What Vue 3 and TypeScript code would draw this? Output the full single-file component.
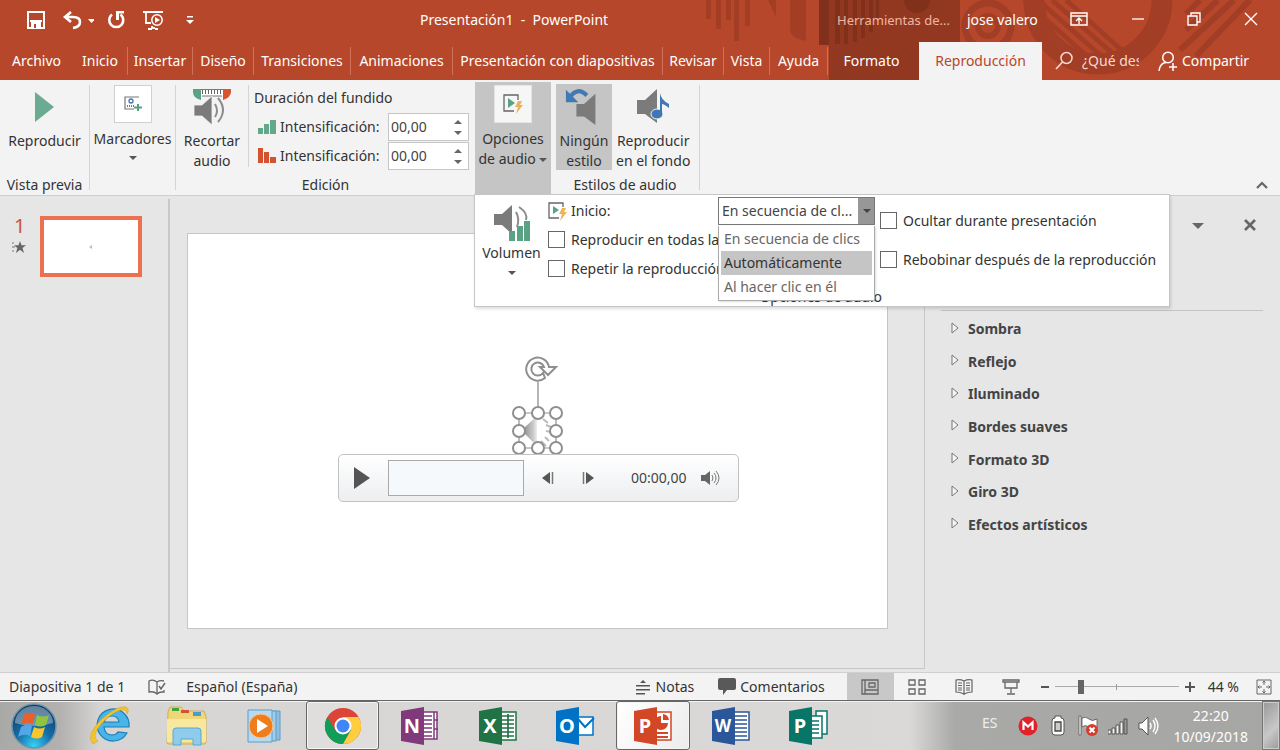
<script setup lang="ts">
import { ref } from 'vue'

interface Tab { label: string; kind?: 'context' | 'active' }
const tabs: Tab[] = [
  { label: 'Archivo' }, { label: 'Inicio' }, { label: 'Insertar' }, { label: 'Diseño' },
  { label: 'Transiciones' }, { label: 'Animaciones' }, { label: 'Presentación con diapositivas' },
  { label: 'Revisar' }, { label: 'Vista' }, { label: 'Ayuda' },
  { label: 'Formato', kind: 'context' }, { label: 'Reproducción', kind: 'active' },
]
const startOptions = ['En secuencia de clics', 'Automáticamente', 'Al hacer clic en él']
const highlighted = ref('Automáticamente')
const effects = ['Sombra', 'Reflejo', 'Iluminado', 'Bordes suaves', 'Formato 3D', 'Giro 3D', 'Efectos artísticos']
const fadeIn = ref('00,00')
const fadeOut = ref('00,00')
const zoom = ref(26)
const handles = [[7, 7], [26, 7], [44, 7], [7, 25], [44, 25], [7, 42], [26, 42], [44, 42]]
</script>

<template>
  <div class="app">
    <header class="head">
      <svg class="decor" viewBox="0 0 600 80" width="600" height="80" aria-hidden="true">
        <path d="M26 0h5v19h-5zM36 0h5v29h-5zM46 0h5v20h-5zM54 0h5v41h-5zM65 0h5v26h-5zM88 0h8v17zM110 0h16v41l-10-3q-6-3-6-9z" fill="#a33e24" />
        <path d="M139 0h10v45h-10z" fill="#80301b" />
        <path d="M149 0h131v42h-41v38h-90z" fill="#933820" />
        <path d="M155 0h5v44h-5zM164 0h4v44h-4zM173 0h4v42h-4zM181 0h4v38h-4zM189 0h4v32h-4zM196 0h3v20h-3z" fill="#813019" />
        <circle cx="237" cy="0" r="13" fill="#813019" />
        <g fill="none" stroke="#a33e26">
          <circle cx="308" cy="26" r="23" stroke-width="7" /><circle cx="308" cy="26" r="10" stroke-width="6" />
          <path d="M354 0a64 64 0 0 0 128 0" stroke-width="21" />
          <path d="M344 0l74 66M358 0l72 64M372 0l68 60M386 0l62 56" stroke-width="5" />
          <path d="M506 14l14-14M506 30l32-30M500 50l54-50M516 56l54-56" stroke-width="6" />
        </g>
      </svg>
      <div class="title-row">
        <div class="quick">
          <button aria-label="Guardar"><svg width="20" height="20" viewBox="0 0 20 20"><path d="M2 2h16v16H2zM4 11h12" fill="none" stroke="#fff" stroke-width="2" /><path d="M5 12h10v6H5z" fill="#fff" /><path d="M8 14h2v4H8z" fill="#b7472a" /></svg></button>
          <button class="undo" aria-label="Deshacer"><svg width="32" height="20" viewBox="0 0 32 20"><path d="M3 7h8q7 0 7 5t-7 6M9 2L3 7l6 5" fill="none" stroke="#fff" stroke-width="2.6" /><path d="M26 9h7l-3.500 4z" fill="#fff" /></svg></button>
          <button class="redo" aria-label="Repetir"><svg width="20" height="20" viewBox="0 0 20 20"><path d="M6 4.500a7 7 0 1 0 8.500 0" fill="none" stroke="#fff" stroke-width="2.6" /><path d="M10 1h8v2.500h-5V10h-3z" fill="#fff" /></svg></button>
          <button aria-label="Presentar"><svg width="22" height="20" viewBox="0 0 22 20"><path d="M1 2h20M4 2v11h5M10 16v3M6 19h4M13 19h3M12 17v2" fill="none" stroke="#fff" stroke-width="1.8" /><circle cx="15" cy="10" r="5.2" fill="none" stroke="#fff" stroke-width="1.5" /><path d="M13 7l5 3-5 3z" fill="#fff" /></svg></button>
          <button class="more" aria-label="Personalizar"><svg width="8" height="10" viewBox="0 0 8 10"><path d="M1 1h6v1.500H1zM0 5h8L4 9z" fill="#fff" /></svg></button>
        </div>
        <h1>Presentación1 &nbsp;- &nbsp;PowerPoint</h1>
        <span class="tools">Herramientas de...</span>
        <span class="user">jose valero</span>
        <div class="win">
          <button aria-label="Opciones de la cinta"><svg width="18" height="14" viewBox="0 0 18 14"><path d="M1 1h16v12H1zM1 4h16M9 12V6M6 9l3-3 3 3" fill="none" stroke="#fff" stroke-width="1.4" /></svg></button>
          <button aria-label="Minimizar"><svg width="14" height="14" viewBox="0 0 14 14"><path d="M1 7h12" stroke="#fff" stroke-width="1.3" /></svg></button>
          <button aria-label="Restaurar"><svg width="14" height="14" viewBox="0 0 14 14"><path d="M1 4h9v9H1zM4 4V1h9v9h-3" fill="none" stroke="#fff" stroke-width="1.4" /></svg></button>
          <button aria-label="Cerrar"><svg width="14" height="14" viewBox="0 0 14 14"><path d="M1 1l12 12M13 1L1 13" stroke="#fff" stroke-width="1.4" /></svg></button>
        </div>
      </div>
      <nav class="tabs">
        <button v-for="t in tabs" :key="t.label" :class="['tab', t.kind]">{{ t.label }}</button>
        <div class="tell">
          <svg width="20" height="20" viewBox="0 0 20 20"><circle cx="12.500" cy="7" r="5.500" fill="none" stroke="#f6d8cf" stroke-width="1.500" /><path d="M8.500 11L2 18" stroke="#f6d8cf" stroke-width="1.700" /></svg>
          <span>¿Qué desea</span>
        </div>
        <button class="share">
          <svg width="20" height="21" viewBox="0 0 20 21"><circle cx="10" cy="6.500" r="5.300" fill="none" stroke="#fff" stroke-width="1.500" /><path d="M1 20q1-8 7-8.500M15 12v8M11 16h8" fill="none" stroke="#fff" stroke-width="1.500" /></svg>
          <span>Compartir</span>
        </button>
      </nav>
    </header>

    <section class="ribbon" aria-label="Reproducción">
      <div class="group g-preview">
        <button class="big"><svg width="22" height="32" viewBox="0 0 22 32"><path d="M1 1l19 15L1 31z" fill="#6bab91" /></svg><span>Reproducir</span></button>
        <footer>Vista previa</footer>
      </div>
      <div class="group g-marks">
        <button class="big boxed"><span class="box"><svg width="20" height="18" viewBox="0 0 20 18"><path d="M16 2H2v12h9" fill="none" stroke="#777" stroke-width="1.200" /><circle cx="8" cy="6" r="2" fill="none" stroke="#3f78b4" stroke-width="1.300" /><path d="M4 11h7" stroke="#777" stroke-width="2" stroke-dasharray="1 1" /><path d="M15 9v7M11 12.500h8" stroke="#55a083" stroke-width="2" /></svg></span><span>Marcadores</span><i class="arrow"></i></button>
      </div>
      <div class="group g-edit">
        <div class="edit-row">
          <button class="big trim"><svg width="40" height="38" viewBox="0 0 40 38"><path d="M3 2h34v6H3z" fill="#fff" /><path d="M8 1.500h24M10 8h20" stroke="#777" /><path d="M10 4h20" stroke="#666" stroke-width="4" stroke-dasharray="1 2" /><path d="M1 1h8v11Q1 10 1 4z" fill="#5ba183" /><path d="M31 1h8v3q0 5-8 8z" fill="#d9532f" /><path d="M2 17h8L20 8v29L10 28H2z" fill="#7b7b7b" stroke="#f3f3f3" stroke-width=".800" /><path d="M23 16q4 7 0 13M26 10q10 12 0 24" fill="none" stroke="#8c8c8c" stroke-width="2" /></svg><span>Recortar<br>audio</span></button>
          <div class="fade">
            <strong>Duración del fundido</strong>
            <div class="fade-line">
              <svg width="18" height="16" viewBox="0 0 18 16"><path d="M0 9h5v6H0zM6 5h5v10H6zM12 1h6v14h-6z" fill="#63a88b" /></svg>
              <label for="fade-in">Intensificación:</label>
              <span class="spin"><input id="fade-in" v-model="fadeIn" type="text"><i class="up"></i><i class="down"></i></span>
            </div>
            <div class="fade-line">
              <svg width="18" height="16" viewBox="0 0 18 16"><path d="M0 0h5v15H0zM6 4h5v11H6zM12 9h6v6h-6z" fill="#d35230" /></svg>
              <label for="fade-out">Intensificación:</label>
              <span class="spin"><input id="fade-out" v-model="fadeOut" type="text"><i class="up"></i><i class="down"></i></span>
            </div>
          </div>
        </div>
        <footer>Edición</footer>
      </div>
      <div class="options">
        <button class="big boxed"><span class="box"><svg width="22" height="22" viewBox="0 0 22 22"><path d="M16 7V2H2v16h10" fill="none" stroke="#666" stroke-width="1.300" /><path d="M6 5l7 5-7 5z" fill="#5ba183" /><path d="M16 8h4l-2 4h3l-7 9 2-7h-3z" fill="#eab35c" /></svg></span><span>Opciones<br>de audio <i class="arrow"></i></span></button>

        <div class="popup">
          <button class="volume"><svg width="40" height="40" viewBox="0 0 40 40"><path d="M2 11h8L20 2v29L10 22H2z" fill="#7b7b7b" /><path d="M24 9q4 7 1 15M27 4q9 6 7 13" fill="none" stroke="#8c8c8c" stroke-width="2" /><path d="M17 28h6v10h-6zM25 23h6v15h-6zM32 18h6v20h-6z" fill="#5ba183" /></svg><span>Volumen</span><i class="arrow"></i></button>
          <div class="pop-left">
            <div class="start">
              <svg width="20" height="20" viewBox="0 0 20 20"><path d="M15 6V2H1v15h10" fill="none" stroke="#666" stroke-width="1.300" /><path d="M5 5l6 4-6 4z" fill="#5ba183" /><path d="M14 7h4l-2 4h3l-7 9 2-7h-3z" fill="#eab35c" /></svg>
              <label for="start">Inicio:</label>
              <select id="start"><option>En secuencia de cl...</option></select>
            </div>
            <label class="check"><input type="checkbox">Reproducir en todas las</label>
            <label class="check"><input type="checkbox">Repetir la reproducción</label>
            <ul class="menu" role="listbox" aria-label="Inicio">
              <li v-for="o in startOptions" :key="o" role="option" :aria-selected="o === highlighted" :class="{ hot: o === highlighted }">{{ o }}</li>
            </ul>
            <p class="caption">Opciones de audio</p>
          </div>
          <div class="pop-right">
            <label class="check"><input type="checkbox">Ocultar durante presentación</label>
            <label class="check"><input type="checkbox">Rebobinar después de la reproducción</label>
          </div>
        </div>
      </div>
      <div class="group g-style">
        <div class="style-row">
          <button class="big on"><svg width="40" height="40" viewBox="0 0 40 40"><path d="M12 18h8L32 7v33L20 31h-8z" fill="#7b7b7b" /><path d="M5 11Q13-1 23 9" fill="none" stroke="#4179b5" stroke-width="4.500" /><path d="M1 3v13h13z" fill="#4179b5" /></svg><span>Ningún<br>estilo</span></button>
          <button class="big"><svg width="36" height="38" viewBox="0 0 36 38"><path d="M2 13h8L22 2v34L10 27H2z" fill="#7b7b7b" /><ellipse cx="22" cy="27" rx="6" ry="5" fill="#3f78b4" stroke="#f3f3f3" /><path d="M25 27V6q1 7 9 11v4q-5-4-7-4v10z" fill="#3f78b4" /></svg><span>Reproducir<br>en el fondo</span></button>
        </div>
        <footer>Estilos de audio</footer>
      </div>
      <button class="collapse" aria-label="Contraer la cinta"><svg width="12" height="8" viewBox="0 0 12 8"><path d="M1 7l5-5 5 5" fill="none" stroke="#666" stroke-width="2.200" /></svg></button>
    </section>

    <main class="work">
      <aside class="thumbs">
        <div class="num"><span>1</span><svg width="14" height="14" viewBox="0 0 14 14"><path d="M8 1l1.500 4.200H14l-3.500 2.700L12 13 8 9.800 4 13l1.300-5.100L2 5.200h4.500z" fill="#666" /><path d="M0 3h2M0 7h3M0 11h2" stroke="#777" /></svg></div>
        <button class="thumb" aria-label="Diapositiva 1"><svg width="6" height="6" viewBox="0 0 6 6"><path d="M1 3l3-2v4z" fill="#bbb" /></svg></button>
      </aside>
      <div class="stage">
        <div class="slide">
          <svg class="picture" width="52" height="100" viewBox="0 0 52 100" aria-hidden="true">
            <defs><linearGradient id="spk"><stop offset="0" stop-color="#999" /><stop offset=".7" stop-color="#ccc" /><stop offset="1" stop-color="#eee" /></linearGradient></defs>
            <g fill="none" stroke="#8f8f8f">
              <path d="M26 27v24" stroke-width="1.300" />
              <path d="M33 23a11.500 11.500 0 1 1 4-11h7l-8 8-8-8h4a6.500 6.500 0 1 0-1 6z" stroke-width="2" />
              <path d="M7 58h37v35H7z" stroke-width="1.200" />
            </g>
            <path d="M13 72l12-11v30L13 79z" fill="url(#spk)" />
            <path d="M31 64l5 4M34 70l5 2M34 76l5 1M33 82l4 4M29 86l5 5" stroke="#bbb" stroke-width="2" />
            <circle v-for="(h, i) in handles" :key="i" :cx="h[0]" :cy="h[1] + 51" r="6" fill="#fff" stroke="#8f8f8f" stroke-width="2" />
          </svg>
          <div class="player">
            <button aria-label="Reproducir"><svg width="18" height="24" viewBox="0 0 18 24"><path d="M1 1l16 11L1 23z" fill="#555" /></svg></button>
            <div class="track"></div>
            <button aria-label="Retroceder"><svg width="12" height="14" viewBox="0 0 12 14"><path d="M8 1v12L0 7z" fill="#555" /><path d="M10.500 1v12" stroke="#777" stroke-width="1.500" /></svg></button>
            <button class="fwd" aria-label="Avanzar"><svg width="12" height="14" viewBox="0 0 12 14"><path d="M4 1v12l8-6z" fill="#555" /><path d="M1.500 1v12" stroke="#777" stroke-width="1.500" /></svg></button>
            <time>00:00,00</time>
            <button aria-label="Silenciar"><svg width="20" height="16" viewBox="0 0 20 16"><path d="M0 5h4l5-4v14l-5-4H0z" fill="#666" /><path d="M11 5q2 3 0 6M13 3q4 5 0 10M15 1q6 7 0 14" fill="none" stroke="#777" /></svg></button>
          </div>
        </div>
      </div>
      <aside class="pane">
        <div class="pane-head">
          <button aria-label="Opciones del panel"><svg width="12" height="6" viewBox="0 0 12 6"><path d="M0 0h12L6 6z" fill="#666" /></svg></button>
          <button aria-label="Cerrar el panel"><svg width="14" height="14" viewBox="0 0 14 14"><path d="M2 2l10 10M12 2L2 12" stroke="#666" stroke-width="2.600" /></svg></button>
        </div>
        <div class="effects">
          <button v-for="e in effects" :key="e"><svg width="8" height="12" viewBox="0 0 8 12"><path d="M1 1l6 5-6 5z" fill="#f5f5f5" stroke="#777" /></svg><span>{{ e }}</span></button>
        </div>
      </aside>
    </main>

    <div class="status">
      <span>Diapositiva 1 de 1</span>
      <svg class="book" width="18" height="16" viewBox="0 0 18 16"><path d="M9 3v12M9 3Q5 0 1 2v11q5-1 8 2 2-2 5-2h2v-2M9 3q3-2 7-1" fill="none" stroke="#666" stroke-width="1.300" /><path d="M11 7l2 3 4-6" fill="none" stroke="#666" stroke-width="1.500" /></svg>
      <span>Español (España)</span>
      <div class="status-right">
        <button class="notes"><svg width="14" height="16" viewBox="0 0 14 16"><path d="M4 4l3-3 3 3zM0 6h14v1.500H0zM0 10h14v1.500H0zM0 14h9v1.500H0z" fill="#555" /></svg>Notas</button>
        <button class="comments"><svg width="18" height="17" viewBox="0 0 18 17"><path d="M2 0h14q2 0 2 2v8q0 2-2 2H9l-4 5v-5H2q-2 0-2-2V2q0-2 2-2z" fill="#595959" /></svg>Comentarios</button>
        <button class="view sel" aria-label="Normal"><svg width="18" height="16" viewBox="0 0 18 16"><path d="M1 1h16v14H1zM4 1v14M4 11h13M8 4h6v4H8z" fill="none" stroke="#666" stroke-width="1.300" /></svg></button>
        <button class="view" aria-label="Clasificador"><svg width="18" height="16" viewBox="0 0 18 16"><path d="M1 1h6v5H1zM11 1h6v5h-6zM1 10h6v5H1zM11 10h6v5h-6z" fill="none" stroke="#666" stroke-width="1.300" /></svg></button>
        <button class="view" aria-label="Lectura"><svg width="18" height="16" viewBox="0 0 18 16"><path d="M9 2v14M9 2Q5 0 1 1v12q4 0 8 2 4-2 8-2V1q-4-1-8 1M3 4h4M3 6.500h4M3 9h4M3 11h4M11 4h4M11 6.500h4M11 9h4M11 11h4" fill="none" stroke="#666" stroke-width="1.200" /></svg></button>
        <button class="view" aria-label="Presentación"><svg width="18" height="16" viewBox="0 0 18 16"><path d="M1 1h16v2H1zM3 3v6h12V3M9 9v5M5 15h8" fill="none" stroke="#666" stroke-width="1.300" /></svg></button>
        <button class="zoom-btn" aria-label="Alejar"><svg width="8" height="8" viewBox="0 0 8 8"><path d="M0 4h8" stroke="#555" stroke-width="2" /></svg></button>
        <input v-model="zoom" class="zoom" type="range" min="0" max="130" aria-label="Zoom">
        <button class="zoom-btn" aria-label="Acercar"><svg width="10" height="10" viewBox="0 0 10 10"><path d="M0 5h10M5 0v10" stroke="#555" stroke-width="2" /></svg></button>
        <span class="percent">44 %</span>
        <button class="fit" aria-label="Ajustar a la ventana"><svg width="16" height="16" viewBox="0 0 16 16"><path d="M1 1h14v14H1z" fill="none" stroke="#666" /><path d="M8 2v4M6.500 3.500L8 2l1.500 1.500M8 14v-4M6.500 12.500L8 14l1.500-1.500M2 8h4M3.500 6.500L2 8l1.500 1.500M14 8h-4M12.500 6.500L14 8l-1.500 1.500" fill="none" stroke="#666" /></svg></button>
      </div>
    </div>

    <div class="taskbar">
      <button class="orb" aria-label="Inicio de Windows">
        <svg width="46" height="46" viewBox="0 0 46 46">
          <defs><radialGradient id="orb" cx=".5" cy=".95" r=".9"><stop offset="0" stop-color="#35d2f6" /><stop offset=".45" stop-color="#176fa8" /><stop offset="1" stop-color="#103c63" /></radialGradient></defs>
          <circle cx="23" cy="23" r="22" fill="url(#orb)" stroke="#6f93ab" stroke-width="1.500" />
          <path d="M4 20a19 17 0 0 1 38 0Q23 26 4 20z" fill="#fff" opacity=".35" />
          <path d="M13 12q5-4 11-1l-2 10q-6-3-12 1z" fill="#ec5f2a" /><path d="M26 12q6 3 12 0l-3 10q-6 3-11 0z" fill="#8fc63d" />
          <path d="M10 24q6-4 11-1l-2 10q-6-3-12 1z" fill="#53a7e8" /><path d="M23 24q6 3 11 0l-3 10q-5 3-11 0z" fill="#fbc62c" />
        </svg>
      </button>
      <div class="apps">
        <button aria-label="Internet Explorer"><svg width="42" height="42" viewBox="0 0 42 42"><path d="M38 28a16 16 0 1 1 2-6H15q1 8 8 8 4 0 6-3zM15 17h15q-1-6-7-6t-8 6z" fill="#48b4e8" stroke="#1d7fb8" stroke-width="1.200" /><path d="M4 39Q-4 30 13 14 29 0 37 2q4 2 1 7 0-5-6-4-9 2-19 13Q1 32 9 36z" fill="#f3c52b" stroke="#dba51c" stroke-width=".600" /></svg></button>
        <button aria-label="Explorador"><svg width="42" height="40" viewBox="0 0 42 40"><path d="M2 6l2-5h11l3 4h20l2 5v26q0 2-2 2H3q-2 0-2-2z" fill="#efd676" stroke="#cfae4c" /><path d="M1 13h39v23H1z" fill="#f7e79f" /><path d="M6 2h7v3H6z" fill="#41a340" /><path d="M15 4h8v3h-8z" fill="#d94f36" /><path d="M27 6h8v4h-8z" fill="#4a9bd4" /><path d="M7 39V25q0-3 3-3h22q3 0 3 3v14h-8v-6H15v6z" fill="#8fcbea" stroke="#5ba8d2" /></svg></button>
        <button aria-label="Reproductor"><svg width="38" height="36" viewBox="0 0 38 36"><path d="M12 3h22v29H12z" fill="#8cbfe0" stroke="#5b9cc8" /><path d="M9 3h21v30H9z" fill="#a2cee8" stroke="#5b9cc8" /><path d="M2 2h24v32H2z" fill="#b6daef" stroke="#5b9cc8" /><circle cx="15" cy="18" r="12" fill="#f07d1c" stroke="#fac891" /><path d="M11 11l11 7-11 7z" fill="#fff" /></svg></button>
        <button class="run" aria-label="Chrome"><svg width="38" height="38" viewBox="0 0 38 38"><circle cx="19" cy="19" r="18" fill="#dc4437" /><path d="M3.400 10A18 18 0 0 0 19 37l8-14-8-4-8 4z" fill="#109d58" /><path d="M19 10h15.600A18 18 0 0 1 19 37l8-14z" fill="#ffcd40" /><circle cx="19" cy="19" r="8.500" fill="#fff" /><circle cx="19" cy="19" r="6.500" fill="#4285f4" /></svg></button>
        <button aria-label="OneNote"><svg width="40" height="40" viewBox="0 0 40 40"><path d="M20 6h17v27H20z" fill="#fff" stroke="#80397b" stroke-width="1.500" /><path d="M22 10h10M22 14h10M22 18h10M22 22h10M22 26h10M22 30h10M34 6v27M34 14h4M34 23h4" stroke="#80397b" stroke-width="1.500" /><path d="M1 5l23-4v38L1 35z" fill="#80397b" /><text x="12" y="27" class="glyph">N</text></svg></button>
        <button aria-label="Excel"><svg width="40" height="40" viewBox="0 0 40 40"><path d="M20 6h18v28H20z" fill="#fff" stroke="#217346" stroke-width="1.500" /><path d="M24 10h12M24 14h12M24 18h12M24 22h12M24 26h12M24 30h12M30 8v24" stroke="#217346" stroke-width="1.700" /><path d="M1 5l23-4v38L1 35z" fill="#217346" /><text x="12" y="27" class="glyph">X</text></svg></button>
        <button aria-label="Outlook"><svg width="40" height="40" viewBox="0 0 40 40"><path d="M20 11h18v18H20z" fill="#fff" stroke="#0072c6" stroke-width="1.500" /><path d="M23 13l7 8 9-9" fill="none" stroke="#0072c6" stroke-width="2" /><path d="M1 5l23-4v38L1 35z" fill="#0072c6" /><text x="12" y="27" class="glyph">O</text></svg></button>
        <button class="run front" aria-label="PowerPoint"><svg width="40" height="40" viewBox="0 0 40 40"><path d="M20 6h18v28H20z" fill="#fff" stroke="#d24726" stroke-width="1.500" /><path d="M28 10v7h7a7 7 0 1 1-7-7zM30 8a7 7 0 0 1 6 6h-6z" fill="#d24726" /><path d="M24 27h11M24 31h11" stroke="#d24726" stroke-width="2" /><path d="M1 5l23-4v38L1 35z" fill="#d24726" /><text x="12" y="27" class="glyph">P</text></svg></button>
        <button aria-label="Word"><svg width="40" height="40" viewBox="0 0 40 40"><path d="M20 6h18v28H20z" fill="#fff" stroke="#2b579a" stroke-width="1.500" /><path d="M24 10h12M24 14h12M24 18h12M24 22h12M24 26h12M24 30h12" stroke="#2b579a" stroke-width="1.700" /><path d="M1 5l23-4v38L1 35z" fill="#2b579a" /><text x="12" y="26" class="glyph w">W</text></svg></button>
        <button aria-label="Publisher"><svg width="40" height="40" viewBox="0 0 40 40"><path d="M28 5h11v23H28z" fill="#fff" stroke="#077568" stroke-width="1.500" /><path d="M20 10h14v22H20z" fill="#fff" stroke="#077568" stroke-width="1.500" /><path d="M24 15h7M24 19h7M24 23h7M24 27h7" stroke="#077568" stroke-width="1.700" /><path d="M1 5l23-4v38L1 35z" fill="#077568" /><text x="12" y="27" class="glyph">P</text></svg></button>
      </div>
      <div class="tray">
        <span class="lang">ES</span>
        <svg width="20" height="20" viewBox="0 0 20 20"><circle cx="10" cy="10" r="9.500" fill="#e1222a" /><path d="M5.500 14V6.500l4.500 4 4.500-4V14" fill="none" stroke="#fff" stroke-width="2.200" /></svg>
        <svg width="20" height="22" viewBox="0 0 20 22"><path d="M7 3V1h6v2q3 0 3 3v11q0 3-3 3H7q-3 0-3-3V6q0-3 3-3z" fill="#fff" stroke="#555" /><path d="M7 7h6v9H7z" fill="#ccc" stroke="#444" stroke-width="1.300" /></svg>
        <svg width="20" height="22" viewBox="0 0 20 22"><path d="M1 1h2v19H1z" fill="#fff" stroke="#555" stroke-width=".800" /><path d="M4 3q4-2 7 1t8 0v9q-4 2-8-1t-7 0z" fill="#fff" stroke="#555" stroke-width=".800" /><circle cx="14" cy="15" r="6" fill="#d53b2f" /><path d="M11.500 12.500l5 5M16.500 12.500l-5 5" stroke="#fff" stroke-width="2" /></svg>
        <svg width="20" height="18" viewBox="0 0 20 18"><path d="M0 13h3v4H0zM4 11h3v6H4zM8 8h3v9H8zM12 5h3v12h-3z" fill="#f4f4f4" stroke="#555" /><path d="M16 2h3v15h-3z" fill="#999" stroke="#555" /></svg>
        <svg width="22" height="20" viewBox="0 0 22 20"><path d="M1 7h3l6-6v18l-6-6H1z" fill="#fff" stroke="#555" /><path d="M12 7q2 3 0 6M15 4q4 6 0 12M17 2q6 8 0 16" fill="none" stroke="#fff" stroke-width="1.400" /></svg>
        <time class="clock">22:20<br>10/09/2018</time>
        <button class="desktop" aria-label="Mostrar escritorio"></button>
      </div>
    </div>
  </div>
</template>

<style>
body { margin: 0; }
</style>

<style scoped>
* { box-sizing: border-box; }
.app { min-height: 100vh; display: flex; flex-direction: column; font: 14px/20px "Noto Sans", "Open Sans", sans-serif; color: #333; background: #e6e6e6; overflow: hidden; }
button { font: inherit; color: inherit; background: none; border: 0; padding: 0; margin: 0; white-space: nowrap; }
svg { display: block; flex: none; }
h1, p, ul { margin: 0; padding: 0; font: inherit; list-style: none; }

.head { position: relative; background: #b7472a; color: #fff; }
.decor { position: absolute; right: 0; top: 0; }
.title-row { position: relative; display: flex; align-items: center; height: 42px; padding-bottom: 2px; }
.quick { display: flex; align-items: center; gap: 16px; padding-left: 26px; width: 220px; }
.quick .undo { margin-right: -4px; }
.quick .more { margin-left: 6px; }
h1 { flex: 1; padding-left: 200px; }
.tools { width: 124px; margin-right: 6px; font-size: 13px; color: #f0b5a3; white-space: nowrap; }
.user { width: 103px; white-space: nowrap; }
.win { display: flex; width: 210px; padding: 0 22px 2px 0; align-items: center; justify-content: space-between; }
.tabs { position: relative; display: grid; grid-template-columns: 73px 55px 65px 61px 97px 102px 210px 61px 46px 58px 91px 123px 1fr 122px; height: 38px; align-items: center; }
.tab { height: 28px; border-right: 1px solid #cf7259; text-align: center; display: flex; align-items: center; justify-content: center; }
.tab:first-child { border: 0; }
.tab.context { border: 0; padding-right: 4px; }
.tab.active { height: 38px; border: 0; background: #f3f3f3; color: #b7472a; }
.tell { display: flex; gap: 8px; align-items: center; padding-left: 12px; color: #f6d8cf; }
.tell span { width: 57px; overflow: hidden; white-space: nowrap; }
.share { display: flex; align-items: center; gap: 4px; }

.ribbon { position: relative; display: flex; height: 116px; background: #f3f3f3; border-bottom: 1px solid #cfcfcf; }
.group { position: relative; display: flex; flex-direction: column; border-right: 1px solid #d4d4d4; margin: 5px 0; }
.group footer { text-align: center; white-space: nowrap; margin-top: auto; margin-bottom: -5px; }
.big { display: flex; flex-direction: column; align-items: center; line-height: 20px; }
.big > svg { margin-bottom: 2px; }
.g-preview { width: 90px; }
.g-preview .big { padding-top: 6px; gap: 6px; }
.g-marks { width: 86px; }
.box { display: flex; align-items: center; justify-content: center; width: 38px; height: 38px; background: #fff; border: 1px solid #d0d0d0; margin-bottom: 6px; }
.arrow { display: inline-block; border: 4px solid transparent; border-top-color: #555; border-bottom: 0; vertical-align: middle; }
.g-marks .arrow { margin-top: 7px; }
.g-edit { width: 299px; border: 0; }
.edit-row { display: flex; }
.trim { width: 73px; border-right: 1px solid #d4d4d4; padding-top: 3px; height: 82px; }
.trim > svg { margin-bottom: 5px; }
.fade { flex: 1; padding-left: 5px; }
.fade strong { display: block; font-weight: 400; margin: 3px 0 4px; }
.fade-line { display: flex; align-items: center; height: 29px; padding: 0 6px 0 4px; }
.fade-line label { flex: 1; padding-left: 4px; white-space: nowrap; }
.spin { position: relative; width: 81px; height: 28px; }
.spin input { width: 100%; height: 28px; border: 1px solid #c6c6c6; padding: 0 2px; font: inherit; color: #444; background: #fff; }
.spin i { position: absolute; right: 7px; border: 4px solid transparent; }
.spin .up { top: 7px; border-bottom-color: #666; border-top: 0; }
.spin .down { bottom: 6px; border-top-color: #666; border-bottom: 0; }
.options { position: relative; width: 76px; background: #c5c5c5; margin-top: 2px; }
.options .big { width: 100%; padding-top: 3px; }
.options .box { border-color: #e5e5e5; background: #f6f6f6; }
.g-style { width: 149px; }
.style-row { display: flex; padding-left: 5px; margin-top: -1px; gap: 4px; }
.style-row .big { height: 86px; padding-top: 3px; }
.style-row .big > svg { height: 38px; margin-bottom: 6px; }
.on { width: 56px; background: #c5c5c5; }
.collapse { margin: auto 12px 6px auto; }

.popup { position: absolute; z-index: 2; left: -1px; top: 112px; width: 696px; height: 113px; background: #fff; border: 1px solid #c6c6c6; box-shadow: 1px 2px 3px #0002; display: flex; }
.volume { width: 73px; display: flex; flex-direction: column; align-items: center; padding-top: 8px; }
.volume span { margin: 0 0 8px; }
.pop-left { position: relative; width: 327px; padding-top: 2px; }
.start { position: relative; display: flex; align-items: center; height: 28px; }
.start label { flex: 1; padding-left: 3px; }
select { appearance: none; width: 157px; height: 28px; border: 1px solid #777; border-radius: 0; padding: 0 0 0 3px; margin: 0; font: inherit; color: #444; background: linear-gradient(to right, #fff 139px, #979797 139px); }
.start::after { content: ""; position: absolute; right: 4px; top: 12px; border: 4px solid transparent; border-top-color: #444; border-bottom: 0; }
.check { display: flex; align-items: center; gap: 6px; height: 29px; white-space: nowrap; }
.check input { appearance: none; margin: 0; width: 17px; height: 17px; border: 1px solid #666; background: #fff; flex: none; }
.menu { position: absolute; z-index: 2; right: 0; top: 31px; width: 157px; height: 75px; background: #fff; border: 1px solid #aaa; border-top: 0; padding: 1px 2px; color: #666; box-shadow: 1px 1px 2px #0002; }
.menu li { height: 24px; line-height: 24px; padding-left: 3px; white-space: nowrap; }
.menu .hot { background: #c5c5c5; color: #333; }
.caption { position: absolute; right: -7px; top: 92px; }
.pop-right { padding: 6px 0 0 5px; }
.pop-right .check { height: 39px; }

.work { flex: 1; display: grid; grid-template-columns: 170px 1fr 355px; }
.thumbs { display: flex; border-right: 2px solid #c8c8c8; margin-top: 3px; padding: 17px 0 0 12px; }
.num { width: 28px; font-size: 20px; line-height: 20px; color: #c8553a; }
.num span { display: block; padding-left: 2px; margin-bottom: 4px; }
.thumb { width: 102px; height: 61px; background: #fff; border: 4px solid #ec7150; display: flex; align-items: center; justify-content: center; }
.stage { border-bottom: 1px solid #c6c6c6; border-right: 1px solid #c8c8c8; margin-bottom: 3px; padding: 37px 36px 0 17px; }
.slide { position: relative; aspect-ratio: 701 / 396; background: #fff; border: 1px solid #c6c6c6; }
.picture { position: absolute; left: 324px; top: 121px; }
.player { position: absolute; left: 150px; top: 220px; width: 401px; height: 48px; display: flex; align-items: center; padding: 0 17px 0 14px; border: 1px solid #c2c2c2; border-radius: 5px; background: linear-gradient(#fff, #eceef0); }
.track { width: 136px; height: 36px; margin: 0 18px 0 17px; background: #f6f9fb; border: 1px solid #aaa; }
.fwd { margin: 0 37px 0 28px; }
.player time { flex: 1; color: #444; }
.pane { padding: 0 17px 0 16px; }
.pane-head { height: 115px; border-bottom: 1px solid #c4c4c4; display: flex; align-items: flex-start; justify-content: flex-end; gap: 39px; padding: 22px 6px 0 0; }
.pane-head button:first-child { padding-top: 5px; }
.effects { display: grid; height: 228px; margin-top: 2px; padding-left: 10px; color: #444; font-weight: 700; }
.effects button { display: flex; align-items: center; gap: 9px; }
.effects svg { margin-bottom: 3px; }

.status { display: flex; align-items: center; height: 28px; background: #f3f3f3; border-top: 1px solid #d0d0d0; padding-left: 9px; }
.book { margin: 0 20px 0 23px; }
.status-right { margin-left: auto; display: flex; align-items: center; align-self: stretch; }
.notes, .comments { display: flex; align-items: center; gap: 6px; }
.comments { margin: 0 22px 0 24px; gap: 4px; }
.view { width: 47px; align-self: stretch; display: flex; align-items: center; justify-content: center; }
.sel { background: #c8c8c8; }
.zoom-btn { margin: 0 6px; }
.zoom { appearance: none; width: 124px; height: 16px; margin: 0; background: linear-gradient(#aaa, #aaa) center / 100% 1px no-repeat, linear-gradient(#999, #999) 50% 50% / 1px 6px no-repeat; }
.zoom::-webkit-slider-thumb { appearance: none; width: 6px; height: 14px; background: #666; }
.percent { margin: 0 17px 0 7px; }
.fit { margin-right: 8px; }

.taskbar { display: flex; height: 50px; border-top: 1px solid #666; box-shadow: inset 0 1px #f2f2f2; background: linear-gradient(to right, #a9a9a7 0, #b2b1af 60px, #d6d5d3 100px, #dad9d8 calc(100% - 370px), #a9a9a7 calc(100% - 325px), #a6a6a4 100%); }
.orb { width: 71px; padding-left: 11px; }
.apps { display: grid; grid-template-columns: repeat(10, 1fr); width: 776px; }
.apps button { display: flex; align-items: center; justify-content: center; margin: 0 2px; }
.apps .run { border: 1px solid #666; border-radius: 3px; background: #dfdedd; box-shadow: inset 0 0 0 1px #f5f5f5; }
.apps .front { background: linear-gradient(120deg, #fff, #ececec); }
.glyph { font: 700 20px "Noto Sans", sans-serif; fill: #fff; text-anchor: middle; }
.glyph.w { font-size: 17px; }
.tray { margin-left: auto; display: flex; align-items: center; gap: 10px; color: #fff; }
.lang { margin: 0 10px 6px 0; color: #eee; }
.clock { text-align: center; line-height: 21px; margin: 0 4px 0 4px; }
.desktop { width: 18px; height: 49px; border: 1px solid #777; background: linear-gradient(135deg, #999, #c8c8c8 60%, #999); box-shadow: inset 0 0 0 1px #ccc; }
</style>
